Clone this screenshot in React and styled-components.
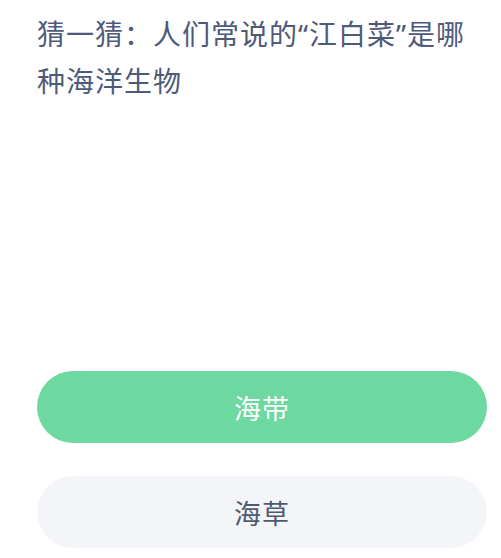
import styled, { createGlobalStyle } from "styled-components";

const GlobalStyle = createGlobalStyle`
  html, body {
    margin: 0;
    padding: 0;
    background: #ffffff;
  }
  body {
    font-family: "Noto Sans CJK SC", "Noto Sans", sans-serif;
  }
`;

const Page = styled.div`
  width: 501px;
  height: 558px;
  box-sizing: border-box;
  padding: 11px 6px 0 37px;
  display: flex;
  flex-direction: column;
  overflow: hidden;
`;

const Question = styled.div`
  font-family: "Noto Sans", "Noto Sans CJK SC", sans-serif;
  font-size: 28px;
  line-height: 47px;
  letter-spacing: 1px;
  color: #4e5a7a;
  white-space: nowrap;
`;

const Options = styled.div`
  margin-top: auto;
  margin-bottom: 10px;
  display: flex;
  flex-direction: column;
  gap: 33px;
`;

const Option = styled.div`
  width: 450px;
  height: 72px;
  border-radius: 36px;
  display: flex;
  align-items: center;
  justify-content: center;
  font-size: 27px;
  letter-spacing: 1px;
  background: ${(p) => (p.$correct ? "#6dd89f" : "#f3f5f8")};
  color: ${(p) => (p.$correct ? "#ffffff" : "#4e5a70")};
`;

const App = () => {
  return (
    <Page>
      <GlobalStyle />
      <Question>
        猜一猜：人们常说的“江白菜”是哪
        <br />
        种海洋生物
      </Question>
      <Options>
        <Option $correct>海带</Option>
        <Option>海草</Option>
      </Options>
    </Page>
  );
};

export default App;
